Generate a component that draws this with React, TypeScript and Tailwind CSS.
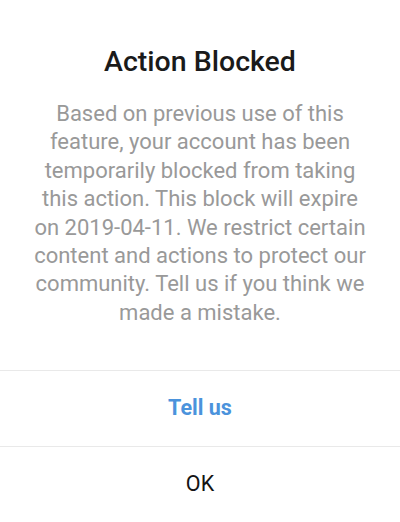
const lines = [
  "Based on previous use of this",
  "feature, your account has been",
  "temporarily blocked from taking",
  "this action. This block will expire",
  "on 2019-04-11. We restrict certain",
  "content and actions to protect our",
  "community. Tell us if you think we",
  "made a mistake.",
];

export default function App() {
  return (
    <div className="flex h-[522px] w-[400px] flex-col bg-white font-['Roboto',sans-serif]">
      {/* Message */}
      <div className="flex flex-col items-center px-4 pt-[43px]">
        <h1 className="text-[28.5px] font-medium leading-[38px] text-[#1a1a1a]">Action Blocked</h1>
        <p className="mt-[19px] whitespace-nowrap text-center text-[22px] leading-[28.4px] text-[#999999]">
          {lines.map((l, i) => (
            <span key={i}>
              {l}
              {i < lines.length - 1 && <br />}
            </span>
          ))}
        </p>
      </div>

      {/* Actions */}
      <div className="mt-auto flex flex-col">
        <button className="h-[76px] border-t-[1.5px] border-[#e9e9e9] text-[21.5px] font-bold text-[#4b93dc]">Tell us</button>
        <button className="h-[76px] border-t-[1.5px] border-[#e9e9e9] text-[21.5px] text-[#141414]">OK</button>
      </div>
    </div>
  );
}
